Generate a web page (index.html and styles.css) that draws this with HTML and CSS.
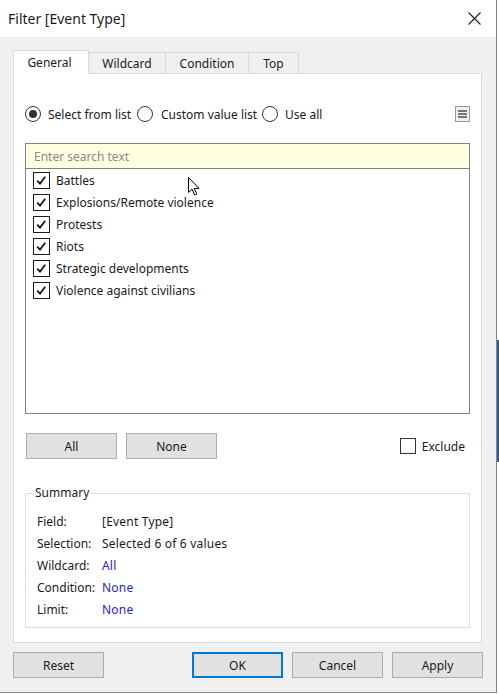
FILE: index.html
```html
<!DOCTYPE html>
<html>
<head>
<meta charset="utf-8">
<title>Filter [Event Type]</title>
<link rel="stylesheet" href="styles.css">
</head>
<body>
<div class="window">
  <div class="titlebar">
    <span class="title">Filter [Event Type]</span>
    <svg class="close" width="13" height="13" viewBox="0 0 13 13"><path d="M0.5 0.5 L12.5 12.5 M12.5 0.5 L0.5 12.5" stroke="#1a1a1a" stroke-width="1.1" fill="none"/></svg>
  </div>
  <div class="content">
    <div class="tabs">
      <div class="tab tab-active tab-general">General</div>
      <div class="tab tab-wildcard">Wildcard</div>
      <div class="tab tab-condition">Condition</div>
      <div class="tab tab-top">Top</div>
    </div>
    <div class="panel">
      <div class="radio-row">
        <label class="opt opt-list"><span class="radio radio-on"></span>Select from list</label>
        <label class="opt opt-custom"><span class="radio"></span>Custom value list</label>
        <label class="opt"><span class="radio"></span>Use all</label>
        <span class="menu-btn"><svg width="9" height="8" viewBox="0 0 9 8"><path d="M0 1 H9 M0 4 H9 M0 7 H9" stroke="#4d4d4d" stroke-width="1.6"/></svg></span>
      </div>
      <div class="listbox">
        <div class="search">Enter search text</div>
        <div class="items">
          <div class="item"><span class="check"><svg width="15" height="15" viewBox="0 0 15 15"><path d="M3.2 7.6 L6 10.6 L11.2 3.8" stroke="#111" stroke-width="1.7" fill="none"/></svg></span>Battles</div>
          <div class="item"><span class="check"><svg width="15" height="15" viewBox="0 0 15 15"><path d="M3.2 7.6 L6 10.6 L11.2 3.8" stroke="#111" stroke-width="1.7" fill="none"/></svg></span>Explosions/Remote violence</div>
          <div class="item"><span class="check"><svg width="15" height="15" viewBox="0 0 15 15"><path d="M3.2 7.6 L6 10.6 L11.2 3.8" stroke="#111" stroke-width="1.7" fill="none"/></svg></span>Protests</div>
          <div class="item"><span class="check"><svg width="15" height="15" viewBox="0 0 15 15"><path d="M3.2 7.6 L6 10.6 L11.2 3.8" stroke="#111" stroke-width="1.7" fill="none"/></svg></span>Riots</div>
          <div class="item"><span class="check"><svg width="15" height="15" viewBox="0 0 15 15"><path d="M3.2 7.6 L6 10.6 L11.2 3.8" stroke="#111" stroke-width="1.7" fill="none"/></svg></span>Strategic developments</div>
          <div class="item"><span class="check"><svg width="15" height="15" viewBox="0 0 15 15"><path d="M3.2 7.6 L6 10.6 L11.2 3.8" stroke="#111" stroke-width="1.7" fill="none"/></svg></span>Violence against civilians</div>
        </div>
        <svg class="cursor" width="13" height="19" viewBox="0 0 13 19"><path d="M0.5 0.5 L0.5 15.5 L4 12.2 L6.6 18 L8.8 17 L6.3 11.4 L11 11.4 Z" fill="#fff" stroke="#000" stroke-width="1"/></svg>
      </div>
      <div class="btn-row">
        <button class="btn">All</button>
        <button class="btn">None</button>
        <label class="exclude"><span class="box"></span>Exclude</label>
      </div>
      <fieldset class="summary">
        <legend>Summary</legend>
        <div class="srow"><span class="slabel">Field:</span><span class="sval">[Event Type]</span></div>
        <div class="srow"><span class="slabel">Selection:</span><span class="sval">Selected 6 of 6 values</span></div>
        <div class="srow"><span class="slabel">Wildcard:</span><span class="sval link">All</span></div>
        <div class="srow"><span class="slabel">Condition:</span><span class="sval link">None</span></div>
        <div class="srow"><span class="slabel">Limit:</span><span class="sval link">None</span></div>
      </fieldset>
    </div>
    <div class="footer">
      <button class="btn">Reset</button>
      <span class="spacer"></span>
      <button class="btn btn-default">OK</button>
      <button class="btn">Cancel</button>
      <button class="btn">Apply</button>
    </div>
  </div>
</div>
</body>
</html>
```
FILE: styles.css
```css
* { box-sizing: border-box; }
html, body { margin: 0; padding: 0; }
body {
  width: 499px;
  height: 694px;
  overflow: hidden;
  font-family: "Noto Sans", "DejaVu Sans", sans-serif;
  font-size: 12px;
  color: #1a1a1a;
  background: linear-gradient(to bottom, #ffffff 0, #ffffff 340px, #3f5b7f 340px, #3f5b7f 462px, #ffffff 462px);
}
.window {
  width: 497px;
  height: 693px;
  border-right: 1px solid #858585;
  border-bottom: 1px solid #858585;
  background: #f0f0f0;
  display: flex;
  flex-direction: column;
}
.titlebar {
  height: 37px;
  background: #ffffff;
  display: flex;
  align-items: center;
  padding: 0 0 0 8px;
  flex-shrink: 0;
}
.title {
  font-size: 14px;
  color: #1a1a1a;
  margin-top: -1px;
}
.close { margin-left: auto; margin-right: 15px; margin-top: -1px; }
.content {
  flex: 1;
  padding: 13px 14px 0 13px;
  display: flex;
  flex-direction: column;
}
.tabs {
  display: flex;
  align-items: flex-end;
  height: 23px;
  position: relative;
  z-index: 1;
}
.tab {
  height: 21px;
  border: 1px solid #d9d9d9;
  border-bottom: none;
  background: #f0f0f0;
  display: flex;
  align-items: center;
  justify-content: center;
  margin-left: -1px;
  padding-top: 1px;
}
.tab-active {
  height: 24px;
  background: #ffffff;
  margin-left: 0;
  margin-bottom: -1px;
  padding-top: 0;
  padding-bottom: 1px;
  padding-right: 3px;
}
.tab-general { width: 76px; }
.tab-wildcard { width: 78px; }
.tab-condition { width: 84px; }
.tab-top { width: 51px; }
.panel {
  width: 469px;
  border: 1px solid #d9d9d9;
  background: #ffffff;
  padding: 30px 11px 14px 11px;
  display: flex;
  flex-direction: column;
}
.radio-row {
  height: 20px;
  display: flex;
  align-items: center;
}
.opt {
  display: flex;
  align-items: center;
  flex-shrink: 0;
}
.opt-list { width: 112px; }
.opt-custom { width: 125px; }
.opt-custom .radio { margin-right: 8px; }
.radio {
  width: 16px;
  height: 16px;
  border: 1px solid #333333;
  border-radius: 50%;
  margin-right: 7px;
  display: flex;
  align-items: center;
  justify-content: center;
  flex-shrink: 0;
}
.radio-on::after {
  content: "";
  width: 8px;
  height: 8px;
  border-radius: 50%;
  background: #333333;
}
.menu-btn {
  margin-left: auto;
  width: 15px;
  height: 16px;
  border: 1px solid #999999;
  background: #f0f0f0;
  display: flex;
  align-items: center;
  justify-content: center;
}
.listbox {
  margin-top: 19px;
  height: 271px;
  border: 1px solid #828282;
  display: flex;
  flex-direction: column;
  position: relative;
}
.search {
  height: 25px;
  background: #ffffe1;
  border-bottom: 1px solid #828282;
  color: #8a8a8a;
  padding-left: 8px;
  display: flex;
  align-items: center;
  flex-shrink: 0;
}
.items {
  flex: 1;
  background: #ffffff;
}
.item {
  height: 22px;
  display: flex;
  align-items: center;
  padding-left: 7px;
  padding-top: 1px;
}
.check {
  width: 17px;
  height: 17px;
  border: 1px solid #1a1a1a;
  margin-right: 6px;
  margin-top: -1px;
  display: flex;
  align-items: center;
  justify-content: center;
  flex-shrink: 0;
}
.cursor {
  position: absolute;
  left: 162px;
  top: 33px;
}
.btn-row {
  margin-top: 19px;
  height: 26px;
  display: flex;
  align-items: center;
  padding-left: 1px;
}
.btn {
  width: 91px;
  height: 26px;
  border: 1px solid #adadad;
  background: #e1e1e1;
  font-family: inherit;
  font-size: 12px;
  color: #1a1a1a;
  padding: 0;
  margin: 0 9px 0 0;
  flex-shrink: 0;
}
.exclude {
  margin-left: auto;
  display: flex;
  align-items: center;
  margin-right: 5px;
}
.box {
  width: 16px;
  height: 16px;
  border: 1px solid #333333;
  margin-right: 6px;
}
.summary {
  margin: 26px 0 0 0;
  padding: 9px 0 7px 11px;
  border: 1px solid #dcdcdc;
  min-width: 0;
}
.summary legend {
  padding: 0 2px;
  margin-left: -4px;
  line-height: 16px;
}
.srow {
  height: 22px;
  display: flex;
  align-items: center;
}
.slabel { width: 65px; }
.sval { letter-spacing: 0.2px; }
.link { color: #2424c8; }
.footer {
  margin-top: 9px;
  margin-right: -1px;
  display: flex;
  height: 26px;
}
.footer .btn:last-child { margin-right: 0; }
.spacer { flex: 1; }
.btn-default {
  border: 2px solid #0078d7;
}
```
